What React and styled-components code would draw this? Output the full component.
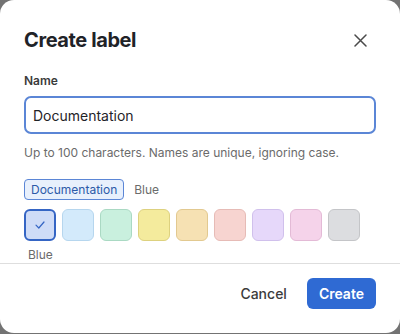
import React, { useState } from "react";
import styled, { createGlobalStyle } from "styled-components";

const GlobalStyle = createGlobalStyle`
  html, body {
    margin: 0;
    padding: 0;
    background: #737373;
    font-family: Inter, "Noto Sans", sans-serif;
  }
`;

const Dialog = styled.div`
  width: 400px;
  height: 333px;
  background: #ffffff;
  border-radius: 14px;
  display: flex;
  flex-direction: column;
  overflow: hidden;
`;

const Header = styled.header`
  display: flex;
  align-items: center;
  justify-content: space-between;
  padding: 28px 24px 0 24px;
`;

const Title = styled.h2`
  margin: 0;
  font-size: 20px;
  line-height: 24px;
  font-weight: 700;
  color: #1f2328;
  letter-spacing: -0.4px;
`;

const CloseButton = styled.button`
  width: 24px;
  height: 24px;
  padding: 0;
  margin-right: 4px;
  border: none;
  background: none;
  display: flex;
  align-items: center;
  justify-content: center;
  color: #4a4a4a;
  cursor: pointer;
`;

const Body = styled.div`
  flex: 1;
  padding: 0 24px;
  overflow: hidden;
`;

const FieldLabel = styled.label`
  display: block;
  margin-top: 21px;
  font-size: 12px;
  line-height: 16px;
  font-weight: 600;
  color: #3b3b3b;
`;

const TextInput = styled.input`
  box-sizing: border-box;
  display: block;
  width: 100%;
  height: 38px;
  margin-top: 7px;
  padding: 0 7px;
  border: 2px solid #5b86d6;
  border-radius: 7px;
  font-family: inherit;
  font-size: 14px;
  color: #1f2328;
  outline: none;
`;

const Hint = styled.p`
  margin: 11px 0 0 0;
  font-size: 12px;
  line-height: 16px;
  color: #6b6b6b;
`;

const PreviewRow = styled.div`
  display: flex;
  align-items: center;
  gap: 10px;
  margin-top: 18px;
`;

const Tag = styled.span`
  display: inline-flex;
  align-items: center;
  height: 21px;
  box-sizing: border-box;
  padding: 0 6px;
  border: 1px solid #5b86d6;
  border-radius: 4px;
  background: #e8f0fc;
  color: #2c5aa8;
  font-size: 12px;
`;

const ColorName = styled.span`
  font-size: 12px;
  color: #6b6b6b;
`;

const Swatches = styled.div`
  display: flex;
  gap: 6px;
  margin-top: 9px;
`;

const Swatch = styled.button`
  box-sizing: border-box;
  width: 32px;
  height: 32px;
  padding: 0;
  border-radius: 6px;
  background: ${({ $fill }) => $fill};
  border: ${({ $selected, $edge }) =>
    $selected ? "2px solid #3565c4" : `1px solid ${$edge}`};
  display: flex;
  align-items: center;
  justify-content: center;
  color: #3565c4;
  cursor: pointer;
`;

const SwatchCaption = styled.div`
  margin-top: 6px;
  padding-left: 4px;
  font-size: 12px;
  line-height: 16px;
  color: #6b6b6b;
`;

const Footer = styled.footer`
  display: flex;
  justify-content: flex-end;
  align-items: flex-start;
  gap: 8px;
  height: 70px;
  box-sizing: border-box;
  padding: 14px 24px 0 24px;
  border-top: 1px solid #dedede;
`;

const GhostButton = styled.button`
  height: 31px;
  padding: 0 12px;
  border: none;
  background: none;
  font-family: inherit;
  font-size: 14px;
  font-weight: 500;
  color: #3b3b3b;
  cursor: pointer;
`;

const PrimaryButton = styled.button`
  height: 31px;
  padding: 0 12px;
  border: none;
  border-radius: 6px;
  background: #2f6ad3;
  font-family: inherit;
  font-size: 14px;
  font-weight: 600;
  color: #ffffff;
  cursor: pointer;
`;

const colors = [
  { name: "Blue", fill: "#cfdcf7", edge: "#3565c4" },
  { name: "Sky", fill: "#d3eafb", edge: "#b6d6ee" },
  { name: "Green", fill: "#c9f0de", edge: "#aad9c3" },
  { name: "Yellow", fill: "#f4eb9d", edge: "#ddd17f" },
  { name: "Orange", fill: "#f6e1b3", edge: "#e2c990" },
  { name: "Red", fill: "#f7d4d0", edge: "#e6bbb6" },
  { name: "Purple", fill: "#e6d8fa", edge: "#d0c0ec" },
  { name: "Pink", fill: "#f5d3ea", edge: "#e3bad6" },
  { name: "Gray", fill: "#dcdde0", edge: "#c4c5c8" },
];

export default function App() {
  const [name, setName] = useState("Documentation");
  const [selected, setSelected] = useState(0);

  return (
    <>
      <GlobalStyle />
      <Dialog>
        <Header>
          <Title>Create label</Title>
          <CloseButton aria-label="Close">
            <svg width="13" height="13" viewBox="0 0 13 13" fill="none">
              <path
                d="M1 1L12 12M12 1L1 12"
                stroke="currentColor"
                strokeWidth="1.5"
                strokeLinecap="round"
              />
            </svg>
          </CloseButton>
        </Header>
        <Body>
          <FieldLabel>Name</FieldLabel>
          <TextInput value={name} onChange={(e) => setName(e.target.value)} />
          <Hint>Up to 100 characters. Names are unique, ignoring case.</Hint>
          <PreviewRow>
            <Tag>{name}</Tag>
            <ColorName>{colors[selected].name}</ColorName>
          </PreviewRow>
          <Swatches>
            {colors.map((c, i) => (
              <Swatch
                key={c.name}
                $fill={c.fill}
                $edge={c.edge}
                $selected={i === selected}
                onClick={() => setSelected(i)}
                aria-label={c.name}
              >
                {i === selected && (
                  <svg width="10" height="8" viewBox="0 0 10 8" fill="none">
                    <path
                      d="M1 4.2L3.8 7L9 1"
                      stroke="currentColor"
                      strokeWidth="1.2"
                      strokeLinecap="round"
                      strokeLinejoin="round"
                    />
                  </svg>
                )}
              </Swatch>
            ))}
          </Swatches>
          <SwatchCaption>{colors[selected].name}</SwatchCaption>
        </Body>
        <Footer>
          <GhostButton>Cancel</GhostButton>
          <PrimaryButton>Create</PrimaryButton>
        </Footer>
      </Dialog>
    </>
  );
}
